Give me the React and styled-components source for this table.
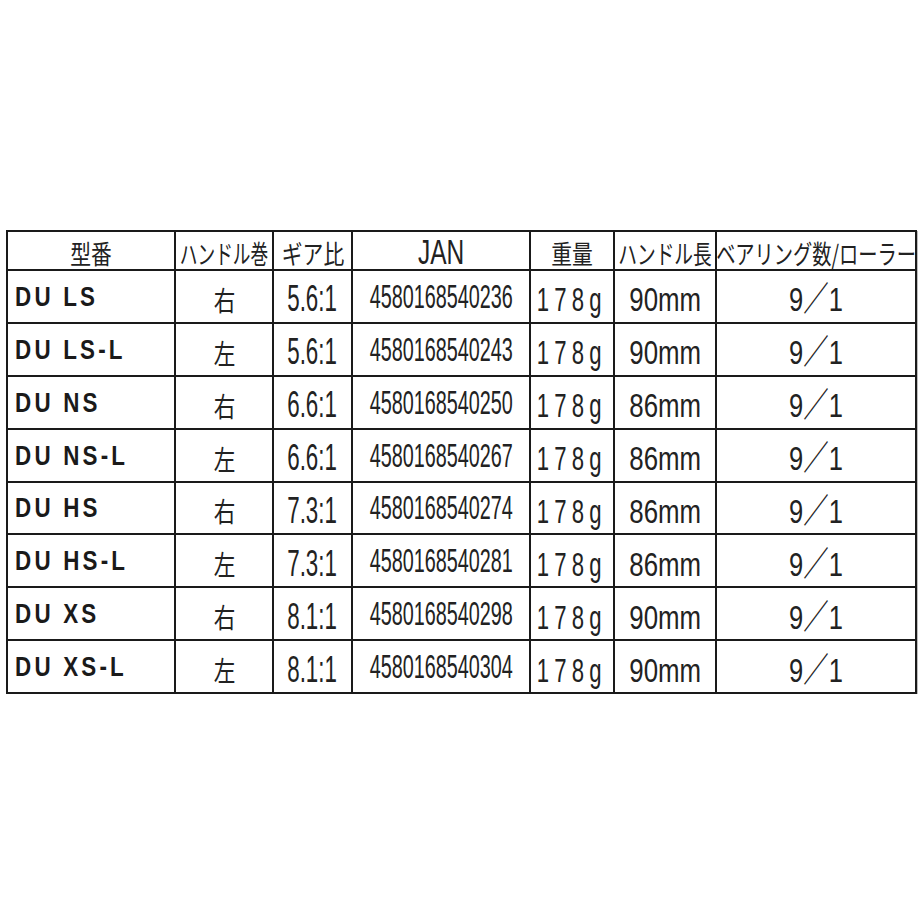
import React from "react";
import styled, { createGlobalStyle } from "styled-components";

const Global = createGlobalStyle`
  html, body { margin: 0; padding: 0; background: #ffffff; }
  body { font-family: "Liberation Sans", "Noto Sans CJK JP", sans-serif; color: #1e1e1e; }
`;

const Table = styled.div`
  display: grid;
  grid-template-columns: 168px 98px 79px 178px 84px 102px 200px;
  grid-template-rows: 39px repeat(8, 52.875px);
  width: max-content;
  margin: 230px 0 0 6px;
  border-top: 2px solid #1a1a1a;
  border-left: 2px solid #1a1a1a;
  box-shadow: 1px 1px 0 #bdbdbd;
`;

const Cell = styled.div`
  box-sizing: border-box;
  border-right: 2px solid #1a1a1a;
  border-bottom: 2px solid #1a1a1a;
  display: flex;
  align-items: center;
  justify-content: ${(p) => (p.$left ? "flex-start" : "center")};
  padding-left: ${(p) => (p.$left ? "7px" : "0")};
  padding-top: ${(p) => p.$dy || 0}px;
  overflow: hidden;
  white-space: nowrap;
`;

const HeadText = styled.span`
  display: inline-block;
  font-family: "Noto Sans CJK JP", sans-serif;
  font-size: 26px;
  line-height: 1;
  color: #222;
  transform: scaleX(${(p) => p.$sx});
`;

const JanHead = styled.span`
  display: inline-block;
  font-family: "Liberation Sans", sans-serif;
  font-size: 35px;
  line-height: 1;
  color: #222;
  transform: scaleX(0.7);
`;

const ModelText = styled.span`
  display: inline-block;
  font-family: "Liberation Sans", sans-serif;
  font-weight: bold;
  font-size: 28px;
  line-height: 1;
  letter-spacing: 4px;
  color: #1a1a1a;
  transform: scaleX(0.8);
  transform-origin: left center;
`;

const HandText = styled.span`
  display: inline-block;
  font-family: "Noto Sans CJK JP", sans-serif;
  font-size: 27px;
  line-height: 1;
  color: #222;
  transform: scaleX(0.8);
`;

const ValueText = styled.span`
  display: inline-block;
  font-family: "Liberation Sans", "Noto Sans CJK JP", sans-serif;
  font-size: ${(p) => p.$size}px;
  line-height: 1;
  letter-spacing: ${(p) => p.$ls || 0}px;
  color: #222;
  transform: scaleX(${(p) => p.$sx});
`;

const headers = [
  { text: "型番", sx: 0.8 },
  { text: "ハンドル巻", sx: 0.68 },
  { text: "ギア比", sx: 0.8 },
  { text: "JAN", jan: true },
  { text: "重量", sx: 0.8 },
  { text: "ハンドル長", sx: 0.72 },
  { text: "ベアリング数/ローラー", sx: 0.74 },
];

const rows = [
  ["DU LS", "右", "5.6:1", "4580168540236", "90mm"],
  ["DU LS-L", "左", "5.6:1", "4580168540243", "90mm"],
  ["DU NS", "右", "6.6:1", "4580168540250", "86mm"],
  ["DU NS-L", "左", "6.6:1", "4580168540267", "86mm"],
  ["DU HS", "右", "7.3:1", "4580168540274", "86mm"],
  ["DU HS-L", "左", "7.3:1", "4580168540281", "86mm"],
  ["DU XS", "右", "8.1:1", "4580168540298", "90mm"],
  ["DU XS-L", "左", "8.1:1", "4580168540304", "90mm"],
];

export default function App() {
  return (
    <>
      <Global />
      <Table>
        {headers.map((h) => (
          <Cell key={h.text} $dy={h.jan ? 2 : 5}>
            {h.jan ? <JanHead>{h.text}</JanHead> : <HeadText $sx={h.sx}>{h.text}</HeadText>}
          </Cell>
        ))}
        {rows.map(([model, hand, gear, jan, len]) => (
          <React.Fragment key={model}>
            <Cell $left $dy={1}>
              <ModelText>{model}</ModelText>
            </Cell>
            <Cell $dy={6}>
              <HandText>{hand}</HandText>
            </Cell>
            <Cell $dy={6}>
              <ValueText $size={36} $sx={0.62}>{gear}</ValueText>
            </Cell>
            <Cell $dy={-2}>
              <ValueText $size={33} $sx={0.6}>{jan}</ValueText>
            </Cell>
            <Cell $dy={6}>
              <ValueText $size={34} $sx={0.65} $ls={8}>178g</ValueText>
            </Cell>
            <Cell $dy={6}>
              <ValueText $size={34} $sx={0.76}>{len}</ValueText>
            </Cell>
            <Cell $dy={6}>
              <ValueText $size={34} $sx={0.75}>9／1</ValueText>
            </Cell>
          </React.Fragment>
        ))}
      </Table>
    </>
  );
}
